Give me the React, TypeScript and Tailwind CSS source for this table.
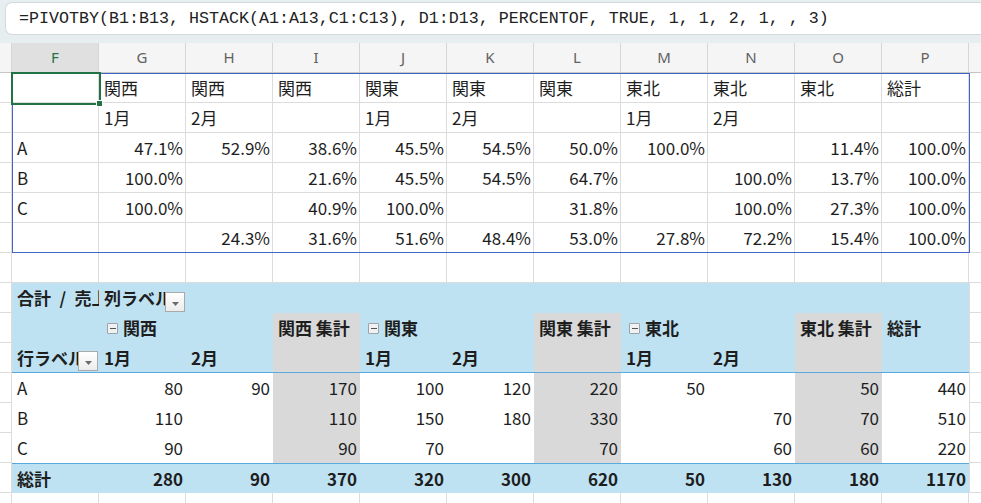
import React from 'react';

const cols = ['F', 'G', 'H', 'I', 'J', 'K', 'L', 'M', 'N', 'O', 'P'];

// dynamic array spilled from PIVOTBY
const spillRows: { cells: string[]; numeric: boolean }[] = [
  { cells: ['', '関西', '関西', '関西', '関東', '関東', '関東', '東北', '東北', '東北', '総計'], numeric: false },
  { cells: ['', '1月', '2月', '', '1月', '2月', '', '1月', '2月', '', ''], numeric: false },
  { cells: ['A', '47.1%', '52.9%', '38.6%', '45.5%', '54.5%', '50.0%', '100.0%', '', '11.4%', '100.0%'], numeric: true },
  { cells: ['B', '100.0%', '', '21.6%', '45.5%', '54.5%', '64.7%', '', '100.0%', '13.7%', '100.0%'], numeric: true },
  { cells: ['C', '100.0%', '', '40.9%', '100.0%', '', '31.8%', '', '100.0%', '27.3%', '100.0%'], numeric: true },
  { cells: ['', '', '24.3%', '31.6%', '51.6%', '48.4%', '53.0%', '27.8%', '72.2%', '15.4%', '100.0%'], numeric: true },
];

const pivotData = [
  ['A', '80', '90', '170', '100', '120', '220', '50', '', '50', '440'],
  ['B', '110', '', '110', '150', '180', '330', '', '70', '70', '510'],
  ['C', '90', '', '90', '70', '', '70', '', '60', '60', '220'],
];
const pivotTotal = ['総計', '280', '90', '370', '320', '300', '620', '50', '130', '180', '1170'];

const grayCols = [3, 6, 9];

function Row({ children, edge }: { children?: React.ReactNode; edge?: boolean }) {
  return (
    <div className="flex h-[30px]">
      <div className="w-[12px] shrink-0 border-r border-b border-[#dcdcdc]" />
      {children}
      <div className={`flex-1 border-b border-[#dcdcdc] ${edge ? 'border-l' : ''}`} />
    </div>
  );
}

function Cell({ text, right }: { text?: string; right?: boolean }) {
  return (
    <div
      className={`w-[87px] shrink-0 h-full border-r border-b border-[#dcdcdc] flex items-center pl-[5px] pr-[2px] whitespace-nowrap overflow-hidden ${right ? 'justify-end' : ''}`}
    >
      {text}
    </div>
  );
}

function PCell({
  children,
  right,
  gray,
}: {
  children?: React.ReactNode;
  right?: boolean;
  gray?: boolean;
}) {
  return (
    <div
      className={`relative w-[87px] shrink-0 h-full flex items-center pl-[5px] pr-[3px] whitespace-nowrap overflow-hidden ${right ? 'justify-end' : ''} ${gray ? 'bg-[#d9d9d9]' : ''}`}
    >
      {children}
    </div>
  );
}

function Dropdown() {
  return (
    <div className="absolute right-[1px] bottom-[1px] w-[20px] h-[20px] border border-[#a9a9a9] bg-gradient-to-b from-white to-[#ececec] flex items-center justify-center">
      <svg width="7" height="4" viewBox="0 0 7 4" className="mt-[3px]">
        <path d="M0 0 L7 0 L3.5 4 Z" fill="#6b6b6b" />
      </svg>
    </div>
  );
}

function Collapse() {
  return (
    <span className="inline-flex w-[11px] h-[11px] mr-[5px] ml-[3px] border border-[#9da3a8] bg-[#f0f1f2] rounded-[1px] items-center justify-center shrink-0">
      <span className="block w-[6px] h-[1px] bg-[#555]" />
    </span>
  );
}

function EmptyRow() {
  return (
    <Row>
      {cols.map((c) => (
        <Cell key={c} />
      ))}
    </Row>
  );
}

export default function App() {
  return (
    <div className="w-[981px] h-[503px] overflow-hidden bg-white font-['Noto_Sans_CJK_JP',sans-serif] text-[17px] text-[#1e1e1e]">
      {/* formula bar */}
      <div className="h-[43px] bg-[#e6eef0] pt-[2px] pl-[5px]">
        <div className="h-[33px] bg-white rounded-l-[7px] border border-r-0 border-[#d3dadd] flex items-center pl-[13px] font-['Liberation_Mono',monospace] text-[16.67px] text-[#222] whitespace-pre">
          =PIVOTBY(B1:B13, HSTACK(A1:A13,C1:C13), D1:D13, PERCENTOF, TRUE, 1, 1, 2, 1, , 3)
        </div>
      </div>

      {/* column headers */}
      <div className="flex h-[30px] bg-[#f5f5f5] border-b border-[#c6c6c6] font-['Noto_Sans',sans-serif] text-[15px] text-[#616161]">
        <div className="w-[12px] shrink-0 border-r border-[#d6d6d6]" />
        {cols.map((c) => (
          <div
            key={c}
            className={`w-[87px] shrink-0 border-r border-[#d6d6d6] flex items-center justify-center ${c === 'F' ? 'bg-[#e0e0e0] text-[#217346]' : ''}`}
          >
            {c}
          </div>
        ))}
        <div className="flex-1" />
      </div>

      <div className="relative">
        {spillRows.map((r, i) => (
          <Row key={i}>
            {r.cells.map((t, j) => (
              <Cell key={j} text={t} right={r.numeric && j > 0} />
            ))}
          </Row>
        ))}
        <EmptyRow />

        {/* pivot table */}
        <Row edge>
          <div className="flex w-[957px] shrink-0 h-full bg-[#bfe2f3] font-bold">
            <PCell>合計{'\u2002'}/{'\u2002'}売上</PCell>
            <PCell>
              列ラベル
              <Dropdown />
            </PCell>
            {cols.slice(2).map((c) => (
              <PCell key={c} />
            ))}
          </div>
        </Row>
        <Row edge>
          <div className="flex w-[957px] shrink-0 h-full bg-[#bfe2f3] font-bold">
            <PCell />
            <PCell>
              <Collapse />
              関西
            </PCell>
            <PCell />
            <PCell gray>関西 集計</PCell>
            <PCell>
              <Collapse />
              関東
            </PCell>
            <PCell />
            <PCell gray>関東 集計</PCell>
            <PCell>
              <Collapse />
              東北
            </PCell>
            <PCell />
            <PCell gray>東北 集計</PCell>
            <PCell>総計</PCell>
          </div>
        </Row>
        <Row edge>
          <div className="flex w-[957px] shrink-0 h-full bg-[#bfe2f3] font-bold border-b border-[#5aa8dc]">
            <PCell>
              行ラベル
              <Dropdown />
            </PCell>
            <PCell>1月</PCell>
            <PCell>2月</PCell>
            <PCell gray />
            <PCell>1月</PCell>
            <PCell>2月</PCell>
            <PCell gray />
            <PCell>1月</PCell>
            <PCell>2月</PCell>
            <PCell gray />
            <PCell />
          </div>
        </Row>
        {pivotData.map((r, i) => (
          <Row key={i} edge>
            <div className="flex w-[957px] shrink-0 h-full bg-white">
              {r.map((t, j) => (
                <PCell key={j} right={j > 0} gray={grayCols.includes(j)}>
                  {t}
                </PCell>
              ))}
            </div>
          </Row>
        ))}
        <Row edge>
          <div className="flex w-[957px] shrink-0 h-full bg-[#bfe2f3] font-bold border-t border-[#5aa8dc]">
            {pivotTotal.map((t, j) => (
              <PCell key={j} right={j > 0}>
                {t}
              </PCell>
            ))}
          </div>
        </Row>
        <EmptyRow />

        {/* spill range border */}
        <div className="absolute left-[12px] top-0 w-[958px] h-[180px] border border-[#3f65c8] pointer-events-none" />
        {/* active cell */}
        <div className="absolute left-[11px] top-[-1px] w-[90px] h-[33px] border-2 border-[#217346] pointer-events-none" />
        <div className="absolute left-[96px] top-[27px] w-[7px] h-[7px] bg-[#217346] border border-white pointer-events-none" />
      </div>
    </div>
  );
}
